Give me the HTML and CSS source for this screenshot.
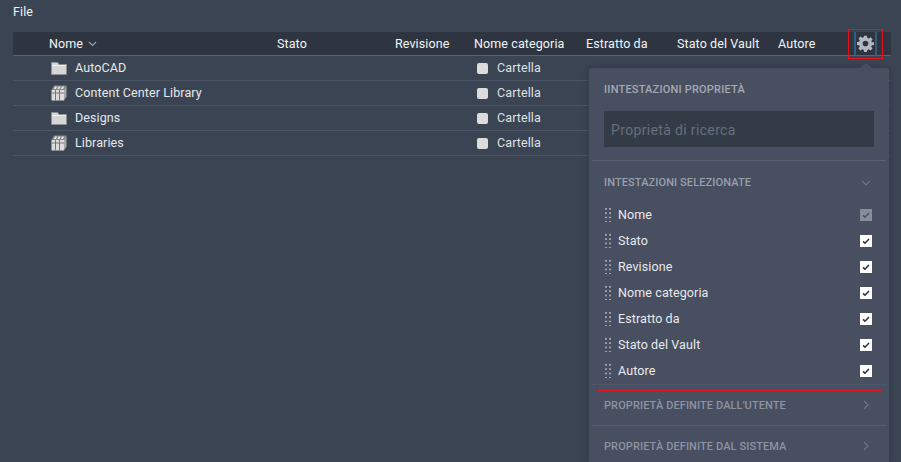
FILE: index.html
```html
<!DOCTYPE html>
<html lang="it">
<head>
<meta charset="utf-8">
<title>File</title>
<link rel="stylesheet" href="styles.css">
</head>
<body>
<svg class="defs" width="0" height="0" aria-hidden="true">
  <symbol id="folder" viewBox="0 0 16 14">
    <path d="M.5 13.500V1.500h6l1.500 2h7.500v10z" fill="#d6d6d6" stroke="#8f8f8f"/>
    <path d="M1 4.500h14" stroke="#f0f0f0"/>
  </symbol>
  <symbol id="library" viewBox="0 0 16 16">
    <path d="M3 .5h12.500L13 5H.5z" fill="#8a8a8a"/>
    <path d="M4 1.500h2L5 4H3zM7.500 1.500h2L8.500 4h-2zM11 1.500h2L12 4h-2z" fill="#e6e6e6"/>
    <path d="M.5 5H13v10.500H.5z" fill="#dcdcdc"/>
    <path d="M13 5l2.500-4.500v11L13 15.500z" fill="#a8a8a8"/>
    <path d="M4.500 5v10.500M8.500 5v10.500M.5 8h12.500" stroke="#777" fill="none"/>
  </symbol>
  <symbol id="check" viewBox="0 0 12 12">
    <path d="M3 6.300l2 1.900 4-4.200" fill="none" stroke="currentColor" stroke-width="1.600"/>
  </symbol>
</svg>

<div class="menu">File</div>

<div class="table">
  <div class="row head">
    <span class="name">Nome <svg class="sort" width="9" height="6" viewBox="0 0 9 6"><path d="M1 1l3.500 3.500L8 1" fill="none" stroke="#9aa1ad" stroke-width="1.200"/></svg></span>
    <span>Stato</span>
    <span>Revisione</span>
    <span>Nome categoria</span>
    <span>Estratto da</span>
    <span>Stato del Vault</span>
    <span>Autore</span>
    <span class="gear">
      <svg width="17" height="17" viewBox="0 0 24 24"><path fill="#b4b8c0" fill-rule="evenodd" d="M10 1h4l.6 3.100 1.900.8 2.700-1.800 2.800 2.800-1.800 2.700.8 1.900L24 10v4l-3.100.6-.8 1.900 1.800 2.700-2.800 2.800-2.700-1.800-1.900.8L14 24h-4l-.6-3.100-1.900-.8-2.700 1.800-2.800-2.800 1.800-2.700-.8-1.900L0 14v-4l3.100-.6.8-1.900L2.100 4.800l2.800-2.800 2.700 1.800 1.900-.8zM12 8a4 4 0 100 8 4 4 0 000-8z"/></svg>
    </span>
  </div>
  <div class="row">
    <span class="name"><svg class="ico" width="16" height="14"><use href="#folder"/></svg>AutoCAD</span>
    <span></span><span></span>
    <span class="cat"><i class="swatch"></i>Cartella</span>
  </div>
  <div class="row">
    <span class="name"><svg class="ico" width="16" height="16"><use href="#library"/></svg>Content Center Library</span>
    <span></span><span></span>
    <span class="cat"><i class="swatch"></i>Cartella</span>
  </div>
  <div class="row">
    <span class="name"><svg class="ico" width="16" height="14"><use href="#folder"/></svg>Designs</span>
    <span></span><span></span>
    <span class="cat"><i class="swatch"></i>Cartella</span>
  </div>
  <div class="row">
    <span class="name"><svg class="ico" width="16" height="16"><use href="#library"/></svg>Libraries</span>
    <span></span><span></span>
    <span class="cat"><i class="swatch"></i>Cartella</span>
  </div>
</div>

<div class="gear-mark"></div>

<aside class="panel">
  <div class="nub"></div>
  <section class="top">
    <h2 class="title">IINTESTAZIONI PROPRIETÀ</h2>
    <div class="search">Proprietà di ricerca</div>
  </section>
  <div class="sec open">
    <h2>INTESTAZIONI SELEZIONATE</h2>
    <svg width="10" height="6" viewBox="0 0 10 6"><path d="M1 1l4 4 4-4" fill="none" stroke="#6f7786" stroke-width="1.200"/></svg>
  </div>
  <ul class="list">
    <li><i class="grip"></i><span>Nome</span><svg class="cb off" width="12" height="12"><use href="#check"/></svg></li>
    <li><i class="grip"></i><span>Stato</span><svg class="cb" width="12" height="12"><use href="#check"/></svg></li>
    <li><i class="grip"></i><span>Revisione</span><svg class="cb" width="12" height="12"><use href="#check"/></svg></li>
    <li><i class="grip"></i><span>Nome categoria</span><svg class="cb" width="12" height="12"><use href="#check"/></svg></li>
    <li><i class="grip"></i><span>Estratto da</span><svg class="cb" width="12" height="12"><use href="#check"/></svg></li>
    <li><i class="grip"></i><span>Stato del Vault</span><svg class="cb" width="12" height="12"><use href="#check"/></svg></li>
    <li><i class="grip"></i><span>Autore</span><svg class="cb" width="12" height="12"><use href="#check"/></svg></li>
  </ul>
  <div class="sec">
    <h2>PROPRIETÀ DEFINITE DALL'UTENTE</h2>
    <svg width="6" height="10" viewBox="0 0 6 10"><path d="M1 1l4 4-4 4" fill="none" stroke="#6f7786" stroke-width="1.200"/></svg>
  </div>
  <div class="sec">
    <h2>PROPRIETÀ DEFINITE DAL SISTEMA</h2>
    <svg width="6" height="10" viewBox="0 0 6 10"><path d="M1 1l4 4-4 4" fill="none" stroke="#6f7786" stroke-width="1.200"/></svg>
  </div>
  <div class="list-mark"></div>
</aside>
</body>
</html>
```

FILE: styles.css
```css
* { box-sizing: border-box; }
html, body { margin: 0; height: 100%; }
body {
  position: relative;
  height: 462px;
  overflow: hidden;
  padding: 5px 10px 0 13px;
  background: #3b4453;
  color: #e6e8eb;
  font: 12.5px/1 Roboto, "Liberation Sans", sans-serif;
  letter-spacing: .1px;
}
.defs { position: absolute; }
.menu { height: 27px; line-height: 14px; color: #f0f1f3; }

.row {
  display: grid;
  grid-template-columns: 228px 118px 79px 112px 91px 101px 71px 1fr;
  align-items: center;
  height: 25px;
  padding-left: 36px;
  border-bottom: 1px solid #4b5464;
}
.row.head {
  height: 24px;
  padding-top: 1px;
  background: #2e3540;
  border-bottom-color: #5a6371;
  color: #f1f3f5;
}
.name { display: flex; align-items: center; white-space: nowrap; }
.row:not(.head) .name { margin-left: 2px; }
.ico { flex: none; margin-right: 8px; }
.sort { margin-left: 5px; }
.cat { display: flex; align-items: center; margin-left: 3px; color: #dfe2e6; }
.swatch {
  flex: none;
  width: 11px;
  height: 11px;
  margin-right: 9px;
  border-radius: 2px;
  background: #dcdcdc;
}
.gear {
  display: flex;
  justify-content: center;
  align-items: center;
  align-self: stretch;
  width: 23px;
  margin-top: -1px;
  margin-left: 5px;
  border: solid #2f5f7d;
  border-width: 0 2px;
}

.gear-mark {
  position: absolute;
  left: 848px;
  top: 29px;
  width: 35px;
  height: 30px;
  border: 1px solid #e8101a;
}

.panel {
  position: absolute;
  left: 589px;
  top: 68px;
  width: 300px;
  height: 394px;
  padding: 0 3px;
  background: #474f60;
  border-radius: 3px 3px 0 0;
  box-shadow: 0 0 6px rgba(25, 30, 38, .35);
}
.nub {
  position: absolute;
  left: 271px;
  top: -5px;
  width: 0;
  height: 0;
  border: solid transparent;
  border-width: 0 6px 5px;
  border-bottom-color: #474f60;
}
.top { height: 93px; padding: 15px 12px 0; border-bottom: 1px solid #5a6272; }
h2 {
  margin: 0;
  font-size: 11px;
  font-weight: 500;
  line-height: 13px;
  letter-spacing: .2px;
  color: #a4a9b4;
}
.search {
  height: 36px;
  margin: 15px 0 0;
  padding-left: 7px;
  background: #333b47;
  color: #666f7d;
  font-size: 14px;
  line-height: 38px;
  letter-spacing: .35px;
}
.sec {
  display: flex;
  justify-content: space-between;
  align-items: center;
  height: 41px;
  padding: 0 17px 0 12px;
  border-bottom: 1px solid #545c6c;
}
.sec h2 { color: #8d94a1; letter-spacing: .1px; }
.sec.open { height: 41px; padding: 2px 15px 0 12px; border: 0; }
.sec.open h2 { color: #98a0ac; }
.list { margin: 0; padding: 0; list-style: none; border-bottom: 1px solid #4e5667; height: 183px; }
.list li {
  display: flex;
  align-items: center;
  height: 26px;
  padding: 0 14px 0 13px;
  color: #e8eaed;
}
.list span { flex: 1; margin-left: 7px; }
.grip {
  flex: none;
  width: 6px;
  height: 14px;
  background-image: radial-gradient(circle at 1px 1px, #9ca3af 1px, transparent 1.100px);
  background-size: 4px 4.300px;
  background-repeat: repeat;
}
.cb { flex: none; background: #fff; color: #2f3744; }
.cb.off { background: #878d9b; color: #4a5262; }
.list-mark {
  position: absolute;
  left: 8px;
  top: 127px;
  width: 285px;
  height: 196px;
  border: 1px solid #d8101a;
  border-bottom: 2px solid #e8101a;
}
```
